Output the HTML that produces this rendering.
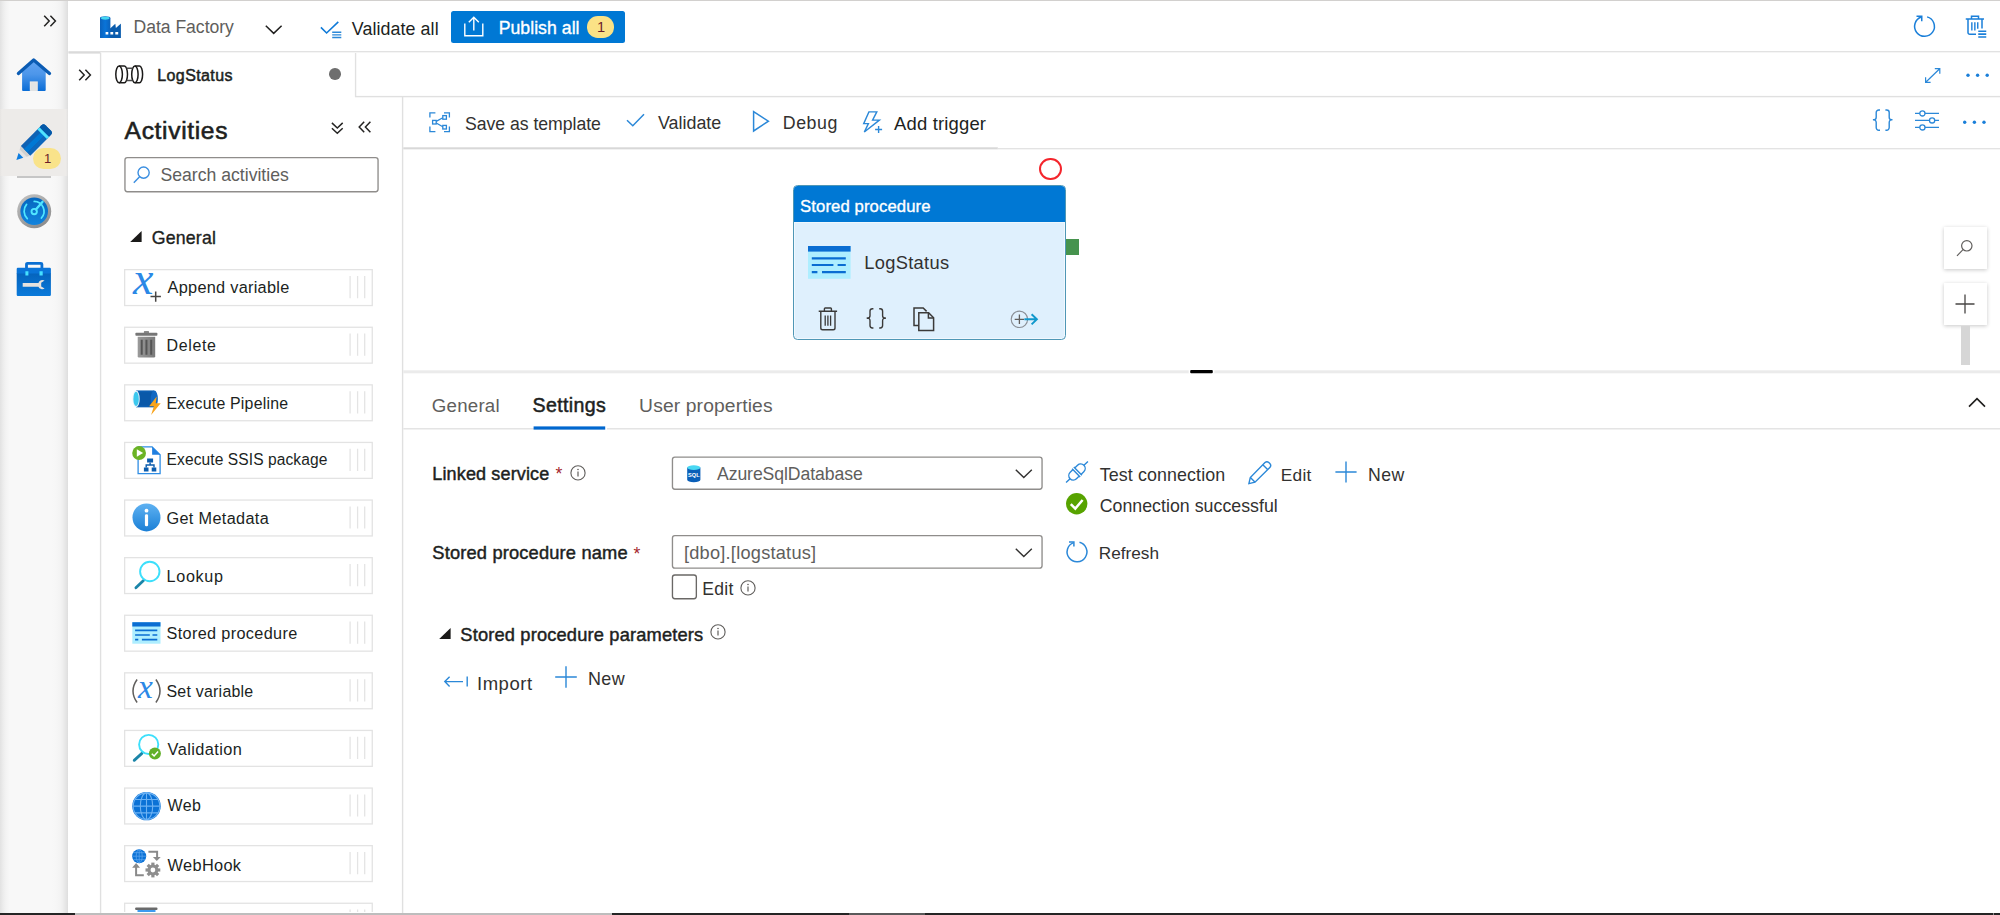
<!DOCTYPE html>
<html lang="en"><head><meta charset="utf-8"><title>LogStatus - Data Factory</title>
<style>
html,body{margin:0;padding:0;}
body{width:2000px;height:915px;overflow:hidden;background:#fff;position:relative;font-family:"Liberation Sans",sans-serif;}
.t{position:absolute;white-space:nowrap;display:block;}
.a{position:absolute;display:block;}
svg{position:absolute;display:block;overflow:visible;}

</style></head>
<body>
<!-- chrome -->
<div class="a" style="left:0;top:0;width:68.400px;height:915px;background:linear-gradient(90deg,#e2e2e2 0,#ececec 3px,#f3f3f3 6px,#f8f8f8 10px,#f8f8f8 52px,#f6f6f6 57px,#f3f3f3 60.500px,#efefef 62.500px,#e9e9e9 64.500px,#e3e3e3 66.500px,#dfdfdf 67.600px,#dfdfdf 68.400px)"></div>
<div class="a" style="left:0;top:109px;width:68.400px;height:66.500px;background:linear-gradient(90deg,#e6e4e2 0,#edebe9 2px,#edebe9 66px,#e4e3e2 67.400px,#e0dfde 68.400px)"></div>
<div class="a" style="left:16.6px;top:176.4px;width:34.4px;height:1.3px;background:#c6c6c6"></div>
<svg style="left:0;top:0" width="2000" height="915" viewBox="0 0 2000 915"><rect x="68.400" y="51" width="1931.600" height="1.350" fill="#e2e2e2"/><rect x="68.400" y="52" width="32.100" height="1.600" fill="#dadada"/><rect x="99.900" y="53" width="1.350" height="862" fill="#e0e0e0"/><rect x="354.900" y="53" width="1.350" height="44" fill="#e1e1e1"/><rect x="355" y="95.900" width="1645" height="1.400" fill="#e0e0e0"/><rect x="401.900" y="97" width="1.400" height="818" fill="#e0e0e0"/><rect x="403.300" y="147.200" width="594.500" height="0.800" fill="#dcdcdc"/><rect x="403.300" y="148" width="594.500" height="1.350" fill="#d8d8d8"/><rect x="997.800" y="148" width="1002.200" height="1.350" fill="#e3e3e3"/><rect x="403.300" y="370.300" width="1596.700" height="3" fill="#ebebeb"/><rect x="1188.700" y="369.800" width="25.600" height="3.800" fill="#fff"/><rect x="1190.200" y="370" width="22.600" height="3.200" rx="1" fill="#000"/><rect x="403.300" y="428" width="1596.700" height="1.500" fill="#e4e4e4"/><rect x="605.200" y="427.500" width="1.800" height="2.500" fill="#fff"/><rect x="533.600" y="426.400" width="71.600" height="3.200" fill="#0067cf"/></svg>
<div class="a" style="left:0;top:0;width:2000px;height:1.400px;background:#d2d0ce"></div>
<!-- bottom strip -->
<div class="a" style="left:0;top:912.700px;width:2000px;height:3px;background:#252525"></div>
<div class="a" style="left:75px;top:912.700px;width:537.400px;height:3px;background:#bdbdbd"></div>
<div class="a" style="left:849px;top:912.700px;width:76px;height:3px;background:#5a5a5a"></div><div class="a" style="left:1992.500px;top:912.700px;width:1.200px;height:3px;background:#8a8a8a"></div>
<!-- publish button -->
<div class="a" style="left:451.2px;top:10.8px;width:173.7px;height:32px;background:#0078d4;border-radius:2.5px"></div>
<div class="a" style="left:586.500px;top:16.200px;width:27.300px;height:21.600px;background:#fbe286;border-radius:10.800px"></div>
<div class="a" style="left:33px;top:147.900px;width:27.500px;height:21.300px;background:#f9e38a;border-radius:10.650px"></div>
<!-- boxes -->
<svg style="left:0;top:0" width="2000" height="915" viewBox="0 0 2000 915"><g fill="#fff" stroke="#8f8d8b" stroke-width="1.350"><rect x="124.950" y="157.650" width="253.100" height="34.100" rx="2.400"/><rect x="672.450" y="457.150" width="369.600" height="32.100" rx="2.400"/><rect x="672.450" y="535.650" width="369.600" height="32.500" rx="2.400"/><rect x="672.450" y="574.950" width="23.900" height="23.800" rx="2.400" stroke="#6a6866"/></g></svg>
<!-- dropdowns -->
<!-- node -->
<div class="a" style="left:792.7px;top:184.9px;width:273.1px;height:155.5px;box-sizing:border-box;border:1.800px solid #4f97b6;border-radius:4.500px;background:#dff0fd;overflow:hidden;box-shadow:inset 0 0 0 1px rgba(255,255,255,0.55)"><div style="height:0.6px;background:#e8f4fb"></div><div style="height:35.600px;background:#0078d4"></div><div style="height:1px;background:#eef7fd"></div></div>
<div class="a" style="left:1065.6px;top:238.8px;width:13.1px;height:16.7px;background:#46934e"></div>
<div class="a" style="left:1038.7px;top:157.8px;width:23px;height:22.6px;box-sizing:border-box;border:2px solid #f4252c;border-radius:50%"></div>
<!-- zoom controls -->
<div class="a" style="left:1943.5px;top:227.4px;width:43px;height:41.6px;background:#fff;box-shadow:0 1px 4px rgba(0,0,0,.22)"></div>
<div class="a" style="left:1943.5px;top:283.3px;width:43px;height:41.6px;background:#fff;box-shadow:0 1px 4px rgba(0,0,0,.22)"></div>
<div class="a" style="left:1960.500px;top:326px;width:9.300px;height:38.700px;background:#d6d6d6"></div>
<!-- sidebar icons -->
<svg style="left:43px;top:15px" width="14" height="12" viewBox="0 0 14 12"><path d="M1.2 0.8L6.2 6L1.2 11.2M7.4 0.8L12.4 6L7.4 11.2" fill="none" stroke="#252423" stroke-width="1.5"/></svg>
<svg style="left:16px;top:58px" width="36" height="34" viewBox="0 0 36 34"><defs><linearGradient id="gh" x1="0" y1="0" x2="0" y2="1"><stop offset="0" stop-color="#62a4f2"/><stop offset="0.450" stop-color="#4d96ea"/><stop offset="1" stop-color="#0a6dd6"/></linearGradient></defs><path d="M6.100 13L17.700 2.600L29.700 13V32a.9.900 0 0 1-.9.900H7a.9.900 0 0 1-.9-.9Z" fill="url(#gh)"/><path d="M2.400 15.400L17.700 1.900L33.500 15.400" fill="none" stroke="#0b5cb4" stroke-width="3.300" stroke-linejoin="round" stroke-linecap="round"/><path d="M13.800 23.400H21.800V32.900H13.800Z" fill="#efe9e4"/><path d="M14.800 24.400H20.800V32.900H14.800Z" fill="#e4e4e4"/></svg>
<svg style="left:0px;top:100px" width="70" height="70" viewBox="0 0 70 70"><g transform="translate(16.4 59.9) rotate(-45)"><path d="M5.600 -2.900L13 -6.700V6.700L5.600 2.900Z" fill="#e4e4e4"/><path d="M9.600 -5L13 -6.700V6.700L9.600 5Z" fill="#d0d0d0"/><path d="M0 0L6.400 -3.300V3.300Z" fill="#0c7ce0"/><path d="M13 -6.700H42.200a2.800 2.800 0 0 1 2.800 2.800V3.900a2.800 2.800 0 0 1-2.800 2.800H13Z" fill="#0f62b4"/><path d="M13 -2.300H38V2.600H13Z" fill="#0078d4"/><path d="M13 2.600H38V6.700H13Z" fill="#0d68bd"/><path d="M36.400 -6.700H39.600V6.700H36.400Z" fill="#4fe3ff"/><path d="M39.600 -6.700H42.200a2.800 2.800 0 0 1 2.800 2.800V3.900a2.800 2.800 0 0 1-2.800 2.800H39.600Z" fill="#0358a8"/></g></svg>
<svg style="left:16.500px;top:193.800px" width="35" height="35" viewBox="0 0 35 35"><defs><linearGradient id="gm" x1="0" y1="0" x2="0" y2="1"><stop offset="0" stop-color="#0566be"/><stop offset="1" stop-color="#1384de"/></linearGradient><linearGradient id="gr" x1="0" y1="0" x2="0.600" y2="1"><stop offset="0" stop-color="#c4c4c4"/><stop offset="1" stop-color="#8e8e8e"/></linearGradient></defs><circle cx="17.200" cy="17.200" r="17" fill="url(#gr)"/><circle cx="17.200" cy="17.200" r="13.800" fill="url(#gm)"/><path d="M9.600 10.400A10.300 10.300 0 0 0 10.300 24.600M17.200 7.400A9.900 9.900 0 0 1 24.400 24" fill="none" stroke="#50e6ff" stroke-width="1.700" stroke-linecap="round"/><path d="M18.900 15.500L25.600 7.800" stroke="#50e6ff" stroke-width="2.300" stroke-linecap="round"/><circle cx="17.200" cy="17.600" r="2.700" fill="none" stroke="#50e6ff" stroke-width="1.900"/></svg>
<svg style="left:16px;top:261px" width="36" height="36" viewBox="0 0 36 36"><defs><linearGradient id="gt" x1="0" y1="0" x2="0" y2="1"><stop offset="0" stop-color="#0564bd"/><stop offset="1" stop-color="#0b7ada"/></linearGradient></defs><path d="M10.500 7.500V3.300a1 1 0 0 1 1-1H24.900a1 1 0 0 1 1 1V7.500" fill="none" stroke="#0a6fd2" stroke-width="2.800"/><path d="M0.700 8a1.200 1.200 0 0 1 1.200-1.200H33.700a1.200 1.200 0 0 1 1.200 1.200V13H0.700Z" fill="#0a74d8"/><path d="M0.700 12.600H34.900V33.800a1.200 1.200 0 0 1-1.200 1.200H1.900a1.200 1.200 0 0 1-1.200-1.200Z" fill="url(#gt)"/><path d="M9.400 10.200H12.400V14.500H9.400ZM23.500 10.200H26.700V14.500H23.500Z" fill="#45e0ff"/><path d="M6.700 21.900H22.400A4.400 4.400 0 0 1 28.600 19.600L25.200 21.700V25.400L28.600 27.500A4.400 4.400 0 0 1 22.400 25.700H6.700Z" fill="#e6e2de"/></svg>
<!-- header icons -->
<svg style="left:99.600px;top:15.500px" width="21" height="22" viewBox="0 0 21 22"><defs><linearGradient id="gdf" x1="0" y1="0" x2="1" y2="0"><stop offset="0" stop-color="#0b62bd"/><stop offset="0.5" stop-color="#0a74d8"/><stop offset="1" stop-color="#0b62bd"/></linearGradient></defs><path d="M10.400 12.300L15.300 7.700L15.900 12L20.700 7.700H20.900V22H5V12.300Z" fill="#0a5cad"/><path d="M0 2.100H10.400V22H0Z" fill="url(#gdf)"/><ellipse cx="5.200" cy="2.100" rx="5.200" ry="1.900" fill="#0b62bd"/><ellipse cx="5.200" cy="2.050" rx="4.300" ry="1.650" fill="#45d6f2"/><path d="M5.600 15.900H8.300V18.600H5.600ZM10.400 15.900H13.200V18.600H10.400ZM15.300 15.900H18.200V18.600H15.300Z" fill="#fff"/></svg>
<svg style="left:264.5px;top:24.5px" width="18" height="10" viewBox="0 0 18 10"><path d="M0.8 0.8L8.7 8.4L16.6 0.8" fill="none" stroke="#201f1e" stroke-width="1.5"/></svg>
<svg style="left:319.5px;top:20.5px" width="22" height="18" viewBox="0 0 22 18"><path d="M0.9 6.4L6.6 12L18.3 0.8" fill="none" stroke="#0f7ad8" stroke-width="1.6"/><path d="M12.2 11.3H21.3M12.2 13.9H21.3M12.2 16.5H21.3" stroke="#2b88d8" stroke-width="1.4"/></svg>
<svg style="left:463.500px;top:16px" width="20" height="21" viewBox="0 0 20 21"><path d="M0.8 7.5V19.8H18.8V7.5M9.8 14.6V1.6M4.8 6.2L9.8 1.3L14.8 6.2" fill="none" stroke="#fff" stroke-width="1.4"/></svg>
<svg style="left:1913px;top:15px" width="24" height="24" viewBox="0 0 24 24"><path d="M14.100 1.850A9.900 9.900 0 1 1 8.300 2.050" fill="none" stroke="#1a7fd9" stroke-width="1.500"/><path d="M3.500 1.300H8.750V6.200" fill="none" stroke="#1a7fd9" stroke-width="1.500"/></svg>
<svg style="left:1965px;top:15px" width="23" height="24" viewBox="0 0 23 24"><g fill="none" stroke="#1a7fd9" stroke-width="1.500"><path d="M0.750 4H19M6.500 4V1.300H13.500V4M3 4V17.400A1.800 1.800 0 0 0 4.800 19.200H11M17 4V13.500"/><path d="M6.850 7.250V15.500M9.850 7.250V15.500M12.750 7.250V13.800" stroke-width="1.400"/><path d="M13.250 16.250H21.250M13.250 19.100H21.250M13.250 22H21.250" stroke-width="1.600"/></g></svg>
<!-- tab row icons -->
<svg style="left:77.500px;top:68.800px" width="14" height="12" viewBox="0 0 14 12"><path d="M1.2 0.8L6.2 6L1.2 11.2M7.4 0.8L12.4 6L7.4 11.2" fill="none" stroke="#252423" stroke-width="1.5"/></svg>
<svg style="left:115px;top:65px" width="29" height="19" viewBox="0 0 29 19"><g fill="none" stroke="#1b1a19" stroke-width="1.500"><ellipse cx="4.100" cy="9.350" rx="3.300" ry="8.300"/><path d="M4.100 1.050H9.400A3.100 8.300 0 0 1 9.400 17.650H4.100"/><ellipse cx="19.900" cy="9.350" rx="3.200" ry="8.300"/><path d="M19.900 1.050H24.500A3.100 8.300 0 0 1 24.500 17.650H19.900"/><path d="M11.600 3.200H17.600M11.600 15.500H17.600" stroke="#4a4a4a" stroke-width="1.400"/></g></svg>
<div class="a" style="left:329px;top:68.2px;width:11.6px;height:11.6px;border-radius:50%;background:#6e6e6e"></div>
<svg style="left:1925px;top:67.500px" width="16" height="15" viewBox="0 0 16 15"><path d="M0.700 14.200L14.700 0.800M9.800 0.700H14.800V5.700M0.600 9.300V14.300H5.600" fill="none" stroke="#2b88d8" stroke-width="1.200"/></svg>
<svg style="left:1965px;top:72px" width="26" height="7" viewBox="0 0 26 7"><g fill="#1a7fd9"><circle cx="3" cy="3.200" r="1.700"/><circle cx="12.600" cy="3.200" r="1.700"/><circle cx="22.200" cy="3.200" r="1.700"/></g></svg>
<svg style="left:1962px;top:118.800px" width="26" height="7" viewBox="0 0 26 7"><g fill="#1a7fd9"><circle cx="2.700" cy="3.200" r="1.700"/><circle cx="12.400" cy="3.200" r="1.700"/><circle cx="22" cy="3.200" r="1.700"/></g></svg>
<!-- activities header icons -->
<svg style="left:330.5px;top:121.5px" width="13" height="13" viewBox="0 0 13 13"><path d="M0.9 0.9L6.3 6L11.7 0.9M0.9 6.2L6.3 11.3L11.7 6.2" fill="none" stroke="#252423" stroke-width="1.5"/></svg>
<svg style="left:358px;top:120.700px" width="14" height="12" viewBox="0 0 14 12"><path d="M6.2 0.8L1.2 6L6.2 11.2M12.4 0.8L7.4 6L12.4 11.2" fill="none" stroke="#252423" stroke-width="1.5"/></svg>
<svg style="left:132.5px;top:166px" width="18" height="18" viewBox="0 0 18 18"><circle cx="10.6" cy="6.6" r="5.6" fill="none" stroke="#3a8ee0" stroke-width="1.4"/><path d="M6.6 10.8L0.8 16.8" stroke="#3a8ee0" stroke-width="1.4"/></svg>
<svg style="left:130px;top:231px" width="12" height="11" viewBox="0 0 12 11"><path d="M11.6 0V11H0.2Z" fill="#1b1a19"/></svg>
<svg style="left:101px;top:260px;overflow:hidden" width="301" height="652.3" viewBox="101 260 301 652.3">
<g transform="translate(124 269.00)"><rect x="0.65" y="0.65" width="247.6" height="35.9" fill="#fff" stroke="#e3e3e3" stroke-width="1.3"/><g transform="translate(0.5 0.40)"><text x="8.400" y="24.600" font-family="Liberation Serif, serif" font-style="italic" font-size="46" fill="#2b88e6">x</text><path d="M31.200 22V32.400M26 27.200H36.400" stroke="#484644" stroke-width="1.5"/></g><path d="M226.1 7V29.2M233.6 7V29.2M240.7 7V29.2" stroke="#e4e4e4" stroke-width="1.3"/></g>
<g transform="translate(124 326.60)"><rect x="0.65" y="0.65" width="247.6" height="35.9" fill="#fff" stroke="#e3e3e3" stroke-width="1.3"/><g transform="translate(0.5 0.47)"><defs><linearGradient id="gd" x1="0" y1="0" x2="1" y2="0"><stop offset="0" stop-color="#9a9a9a"/><stop offset="1" stop-color="#7a7a7a"/></linearGradient></defs><path d="M19.4 5.9V4.6a.6.6 0 0 1 .6-.6h3.9a.6.6 0 0 1 .6.6V5.9Z" fill="#8a8a8a"/><rect x="10.9" y="5.7" width="22" height="3" rx="0.8" fill="#767676"/><path d="M13.2 9.6H30.7V29.2a1.2 1.2 0 0 1-1.2 1.2H14.4a1.2 1.2 0 0 1-1.2-1.2Z" fill="url(#gd)"/><path d="M17.2 12.6V27.6M21.95 12.6V27.6M26.7 12.6V27.6" stroke="#555" stroke-width="2"/></g><path d="M226.1 7V29.2M233.6 7V29.2M240.7 7V29.2" stroke="#e4e4e4" stroke-width="1.3"/></g>
<g transform="translate(124 384.20)"><rect x="0.65" y="0.65" width="247.6" height="35.9" fill="#fff" stroke="#e3e3e3" stroke-width="1.3"/><g transform="translate(0.5 0.54)"><path d="M11.5 5.7H29.5V22.6H11.5Z" fill="#0d5fb3"/><path d="M13.5 7.6H28.5V20.8H13.5Z" fill="#0a58a8"/><ellipse cx="29.8" cy="14.15" rx="3.6" ry="8.45" fill="#1168c2"/><ellipse cx="11.6" cy="14.15" rx="3.6" ry="8.45" fill="#e8f4fb"/><ellipse cx="11.6" cy="14.15" rx="2.7" ry="7.2" fill="#3cc8ee"/><path d="M32.2 11.7L24.6 21.6H29.4L26.6 30.3L36.2 18.6H31.2Z" fill="#f9a41c"/></g><path d="M226.1 7V29.2M233.6 7V29.2M240.7 7V29.2" stroke="#e4e4e4" stroke-width="1.3"/></g>
<g transform="translate(124 441.80)"><rect x="0.65" y="0.65" width="247.6" height="35.9" fill="#fff" stroke="#e3e3e3" stroke-width="1.3"/><g transform="translate(0.5 0.61)"><path d="M13.6 4.4H27.6L35.6 12.4V31.2H13.6Z" fill="#fff" stroke="#2f8de4" stroke-width="1.3"/><path d="M27.6 4.4L35.6 12.4H27.6Z" fill="#1f7fe0"/><path d="M22.6 16H28.6V20H22.6ZM19.4 25H24V29H19.4ZM27.2 25H31.8V29H27.2Z" fill="#0b5cad"/><path d="M25.6 20V22.6M21.7 25V22.6H29.5V25" fill="none" stroke="#0b5cad" stroke-width="1.4"/><circle cx="14.6" cy="10.6" r="6.9" fill="#6bb324"/><path d="M12.3 6.8L18.6 10.6L12.3 14.4Z" fill="#fff"/></g><path d="M226.1 7V29.2M233.6 7V29.2M240.7 7V29.2" stroke="#e4e4e4" stroke-width="1.3"/></g>
<g transform="translate(124 499.40)"><rect x="0.65" y="0.65" width="247.6" height="35.9" fill="#fff" stroke="#e3e3e3" stroke-width="1.3"/><g transform="translate(0.5 0.68)"><defs><linearGradient id="gi" x1="0" y1="0" x2="0" y2="1"><stop offset="0" stop-color="#5fb2f2"/><stop offset="1" stop-color="#1a7fd6"/></linearGradient></defs><circle cx="22" cy="17.3" r="14" fill="url(#gi)"/><circle cx="22" cy="10.6" r="1.9" fill="#fff"/><rect x="20.4" y="14.2" width="3.2" height="12" rx="1.4" fill="#fff"/></g><path d="M226.1 7V29.2M233.6 7V29.2M240.7 7V29.2" stroke="#e4e4e4" stroke-width="1.3"/></g>
<g transform="translate(124 557.00)"><rect x="0.65" y="0.65" width="247.6" height="35.9" fill="#fff" stroke="#e3e3e3" stroke-width="1.3"/><g transform="translate(0.5 0.75)"><path d="M19 22.8L11.4 30" stroke="#1b85a8" stroke-width="2.8" stroke-linecap="round"/><circle cx="25.3" cy="13.75" r="9.7" fill="#fff" stroke="#3ddffb" stroke-width="1.9"/></g><path d="M226.1 7V29.2M233.6 7V29.2M240.7 7V29.2" stroke="#e4e4e4" stroke-width="1.3"/></g>
<g transform="translate(124 614.60)"><rect x="0.65" y="0.65" width="247.6" height="35.9" fill="#fff" stroke="#e3e3e3" stroke-width="1.3"/><g transform="translate(0.5 0.82)"><rect x="7.8" y="6.8" width="28.2" height="21.5" fill="#aeeeff"/><rect x="7.8" y="6.8" width="28.2" height="4.3" fill="#0a6dd2"/><path d="M10.6 15H32.8M10.6 19.6H25.3M28 19.6H32.8M10.6 24.3H13.8M17.4 24.3H32.8" stroke="#0a6dd2" stroke-width="1.7"/></g><path d="M226.1 7V29.2M233.6 7V29.2M240.7 7V29.2" stroke="#e4e4e4" stroke-width="1.3"/></g>
<g transform="translate(124 672.20)"><rect x="0.65" y="0.65" width="247.6" height="35.9" fill="#fff" stroke="#e3e3e3" stroke-width="1.3"/><g transform="translate(0.5 0.89)"><path d="M12.6 6.4Q4.4 18 12.6 29.4M31.4 6.4Q39.6 18 31.4 29.4" fill="none" stroke="#605e5c" stroke-width="1.5"/><text x="13.6" y="25.2" font-family="Liberation Serif, serif" font-style="italic" font-size="33.5" fill="#2b88e6">x</text></g><path d="M226.1 7V29.2M233.6 7V29.2M240.7 7V29.2" stroke="#e4e4e4" stroke-width="1.3"/></g>
<g transform="translate(124 729.80)"><rect x="0.65" y="0.65" width="247.6" height="35.9" fill="#fff" stroke="#e3e3e3" stroke-width="1.3"/><g transform="translate(0.5 0.96)"><path d="M17.4 22.6L9.7 29.6" stroke="#1b85a8" stroke-width="2.8" stroke-linecap="round"/><circle cx="24.2" cy="13.7" r="9.6" fill="#fff" stroke="#3ddffb" stroke-width="1.9"/><circle cx="30.4" cy="22.8" r="6" fill="#62b02a"/><path d="M27.3 23L29.6 25.2L33.6 20.8" fill="none" stroke="#fff" stroke-width="1.5"/></g><path d="M226.1 7V29.2M233.6 7V29.2M240.7 7V29.2" stroke="#e4e4e4" stroke-width="1.3"/></g>
<g transform="translate(124 787.40)"><rect x="0.65" y="0.65" width="247.6" height="35.9" fill="#fff" stroke="#e3e3e3" stroke-width="1.3"/><g transform="translate(0.5 1.03)"><circle cx="22" cy="17.7" r="14.2" fill="#0b72d6"/><g fill="none" stroke="#6db2f3" stroke-width="1.1"><circle cx="22" cy="17.7" r="13.3"/><ellipse cx="22" cy="17.7" rx="6.2" ry="13.3"/><path d="M22 4.4V31M8.7 17.7H35.3M10.6 11H33.4M10.6 24.4H33.4"/></g></g><path d="M226.1 7V29.2M233.6 7V29.2M240.7 7V29.2" stroke="#e4e4e4" stroke-width="1.3"/></g>
<g transform="translate(124 845.00)"><rect x="0.65" y="0.65" width="247.6" height="35.9" fill="#fff" stroke="#e3e3e3" stroke-width="1.3"/><g transform="translate(0.5 1.10)"><circle cx="14.7" cy="10.1" r="7" fill="#0b72d6"/><g fill="none" stroke="#5aa5ef" stroke-width="0.8"><ellipse cx="14.7" cy="10.1" rx="3" ry="6.6"/><path d="M14.7 3.4V16.8M8 10.1H21.4M9 6.6H20.4M9 13.6H20.4"/></g><path d="M23.9 5.7H32.6V11.4" fill="none" stroke="#8a8a8a" stroke-width="2"/><path d="M28.4 10.8H36.2L32.3 14.8Z" fill="#8a8a8a"/><path d="M19.3 29.2H11.6V21" fill="none" stroke="#8a8a8a" stroke-width="2"/><path d="M7.6 21.6H15.6L11.6 17Z" fill="#8a8a8a"/><g transform="translate(28.4 23.9)"><g fill="#8e8e8e"><rect x="-1.6" y="-7.4" width="3.2" height="14.8"/><rect x="-1.6" y="-7.4" width="3.2" height="14.8" transform="rotate(45)"/><rect x="-1.6" y="-7.4" width="3.2" height="14.8" transform="rotate(90)"/><rect x="-1.6" y="-7.4" width="3.2" height="14.8" transform="rotate(135)"/></g><circle r="5.4" fill="#8e8e8e"/><circle r="2.4" fill="#fff"/></g></g><path d="M226.1 7V29.2M233.6 7V29.2M240.7 7V29.2" stroke="#e4e4e4" stroke-width="1.3"/></g>
<g transform="translate(124 902.60)"><rect x="0.65" y="0.65" width="247.6" height="35.9" fill="#fff" stroke="#e3e3e3" stroke-width="1.3"/><g transform="translate(0.5 1.17)"><rect x="10.6" y="3.8" width="22.4" height="2.4" rx="1" fill="#6a6a6a"/><rect x="13" y="6.2" width="18" height="4" fill="#3c9bf0"/></g><path d="M226.1 7V29.2M233.6 7V29.2M240.7 7V29.2" stroke="#e4e4e4" stroke-width="1.3"/></g>
</svg>
<!-- toolbar icons -->
<svg style="left:429px;top:111.5px" width="22" height="21" viewBox="0 0 22 21"><g fill="none" stroke="#2b88d8" stroke-width="1.3"><path d="M0.9 5.6V0.9H6.4M15 0.9H20.4V5.6M20.4 14.6V19.6H15M6.4 19.6H0.9V14.6"/><rect x="3.6" y="8.4" width="3.6" height="3.6"/><rect x="13.8" y="3.6" width="3.6" height="3.6"/><rect x="13.8" y="13.4" width="3.6" height="3.6"/><path d="M7.2 9.4L13.8 5.8M7.2 11L13.8 14.8"/></g></svg>
<svg style="left:626px;top:112.700px" width="19" height="14" viewBox="0 0 19 14"><path d="M1 7.2L6.8 12.8L18 1.2" fill="none" stroke="#2b88d8" stroke-width="1.5"/></svg>
<svg style="left:751.5px;top:110px" width="18" height="23" viewBox="0 0 18 23"><path d="M1.6 1.6L16.4 11.2L1.6 21Z" fill="none" stroke="#2b88d8" stroke-width="1.5" stroke-linejoin="miter"/></svg>
<svg style="left:863px;top:110.5px" width="20" height="23" viewBox="0 0 20 23"><path d="M5.9 0.9H13.8L9.6 9.1H16.4L1.3 21L5.4 12.6H0.7Z" fill="none" stroke="#2b88d8" stroke-width="1.4" stroke-linejoin="miter"/><path d="M15.6 15V22M12.1 18.5H19.1" stroke="#2b88d8" stroke-width="1.4"/></svg>
<svg style="left:1871.5px;top:109px" width="22" height="23" viewBox="0 0 22 23"><path d="M8 1H6.8a2.6 2.6 0 0 0-2.6 2.6V8.2a2.6 2.6 0 0 1-2.6 2.6H1A2.6 2.6 0 0 1 4.200 13.400V18.600a2.600 2.600 0 0 0 2.600 2.600H8M13.4 1H14.600a2.600 2.600 0 0 1 2.600 2.600V8.200a2.600 2.600 0 0 0 2.600 2.600H20.400A2.600 2.600 0 0 0 17.200 13.400V18.600a2.600 2.600 0 0 1-2.600 2.600H13.400" fill="none" stroke="#2b88d8" stroke-width="1.4"/></svg>
<svg style="left:1915px;top:110px" width="24" height="21" viewBox="0 0 24 21"><g fill="#fff" stroke="#2b88d8" stroke-width="1.3"><path d="M0 3.400H24M0 10.4H24M0 17.4H24" fill="none"/><circle cx="7.400" cy="3.400" r="2.600"/><circle cx="17.100" cy="10.400" r="2.600"/><circle cx="7.400" cy="17.400" r="2.600"/></g></svg>
<!-- node icons -->
<svg style="left:808px;top:245.8px" width="43" height="33" viewBox="0 0 43 33"><rect width="42.6" height="32.8" fill="#aeeeff"/><rect width="42.6" height="5.6" fill="#0a6dd2"/><path d="M3.800 12.4H37.8M3.800 19H25.400M29.600 19H37.8M3.800 26.2H9.400M14 26.2H37.8" stroke="#0a6dd2" stroke-width="2.200"/></svg>
<svg style="left:818px;top:306.5px" width="20" height="24" viewBox="0 0 20 24"><g fill="none" stroke="#3b3a39" stroke-width="1.4"><path d="M0.7 4.200H19.100M6.400 4V1.800a.8.8 0 0 1 .8-.8H12.600a.8.8 0 0 1 .8.8V4M2.800 4.400V21a1.800 1.800 0 0 0 1.800 1.800H15.200a1.800 1.800 0 0 0 1.800-1.800V4.400"/><path d="M7.200 8.400V18.800M9.900 8.400V18.800M12.600 8.400V18.800" stroke-width="1.300"/></g></svg>
<svg style="left:865.5px;top:307.5px" width="21" height="21" viewBox="0 0 21 21"><path d="M7.400 0.800H6.400a2.400 2.400 0 0 0-2.400 2.400V7.800a2.400 2.400 0 0 1-2.400 2.400H0.800A2.400 2.400 0 0 1 4 12.600V17.600a2.400 2.400 0 0 0 2.400 2.400H7.400M13.200 0.800H14.200a2.400 2.400 0 0 1 2.400 2.400V7.800a2.400 2.400 0 0 0 2.400 2.400H19.800A2.400 2.400 0 0 0 16.600 12.600V17.600a2.400 2.400 0 0 1-2.400 2.400H13.200" fill="none" stroke="#3b3a39" stroke-width="1.400"/></svg>
<svg style="left:912.5px;top:306.500px" width="22" height="25" viewBox="0 0 22 25"><g fill="none" stroke="#3b3a39" stroke-width="1.500"><path d="M5.800 18.600H1V1H10.200L13.600 4.400"/><path d="M5.800 5.800H15.600L20.600 10.800V23.600H5.800Z"/><path d="M15.400 5.800V11H20.600"/></g></svg>
<svg style="left:1009.500px;top:309.500px" width="30" height="19" viewBox="0 0 30 19"><circle cx="9.400" cy="9.300" r="8.200" fill="none" stroke="#8a8f96" stroke-width="1.100"/><path d="M9.400 4.600V14M4.700 9.300H14.100" stroke="#605e5c" stroke-width="1.300"/><path d="M14.400 9.300H26.600M21.600 4.200L26.900 9.300L21.600 14.400" fill="none" stroke="#1098cc" stroke-width="1.900"/></svg>
<!-- zoom control icons -->
<svg style="left:1955.500px;top:238.500px" width="18" height="18" viewBox="0 0 18 18"><circle cx="10.800" cy="6.800" r="5.200" fill="none" stroke="#605e5c" stroke-width="1.200"/><path d="M7 10.600L1 16.800" stroke="#605e5c" stroke-width="1.200"/></svg>
<svg style="left:1954.500px;top:293.500px" width="20" height="20" viewBox="0 0 20 20"><path d="M10 0.500V19.500M0.500 10H19.500" stroke="#484644" stroke-width="1.300"/></svg>
<svg style="left:1968px;top:397px" width="18" height="11" viewBox="0 0 18 11"><path d="M1 9.600L9 1.600L17 9.600" fill="none" stroke="#201f1e" stroke-width="1.600"/></svg>
<!-- form icons -->
<svg style="left:570px;top:465.400px" width="16" height="16" viewBox="0 0 16 16"><circle cx="8" cy="7.900" r="7.100" fill="none" stroke="#605e5c" stroke-width="1.100"/><path d="M8 6.600V11.600" stroke="#605e5c" stroke-width="1.200"/><circle cx="8" cy="4.500" r="0.800" fill="#605e5c"/></svg>
<svg style="left:740px;top:579.600px" width="16" height="16" viewBox="0 0 16 16"><circle cx="8" cy="7.900" r="7.100" fill="none" stroke="#605e5c" stroke-width="1.100"/><path d="M8 6.600V11.600" stroke="#605e5c" stroke-width="1.200"/><circle cx="8" cy="4.500" r="0.800" fill="#605e5c"/></svg>
<svg style="left:710.200px;top:624.400px" width="16" height="16" viewBox="0 0 16 16"><circle cx="8" cy="7.900" r="7.100" fill="none" stroke="#605e5c" stroke-width="1.100"/><path d="M8 6.600V11.600" stroke="#605e5c" stroke-width="1.200"/><circle cx="8" cy="4.500" r="0.800" fill="#605e5c"/></svg>
<svg style="left:686.500px;top:464.800px" width="14" height="18" viewBox="0 0 14 18"><path d="M0.200 2.600V14.800A6.600 2.400 0 0 0 13.400 14.800V2.600Z" fill="#0a5fb8"/><ellipse cx="6.800" cy="2.600" rx="6.600" ry="2.400" fill="#49d7f2"/><text x="6.800" y="11.600" font-family="Liberation Sans, sans-serif" font-weight="700" font-size="5.600" fill="#fff" text-anchor="middle">SQL</text></svg>
<svg style="left:1014.500px;top:468.800px" width="18" height="10" viewBox="0 0 18 10"><path d="M0.800 0.800L8.800 8.600L16.800 0.800" fill="none" stroke="#323130" stroke-width="1.400"/></svg>
<svg style="left:1014.500px;top:548.200px" width="18" height="10" viewBox="0 0 18 10"><path d="M0.800 0.800L8.800 8.600L16.800 0.800" fill="none" stroke="#323130" stroke-width="1.400"/></svg>
<svg style="left:1062px;top:457.400px" width="30" height="30" viewBox="0 0 30 30"><g transform="translate(15 15) rotate(-44)" fill="none" stroke="#2b88d8" stroke-width="1.400"><path d="M-15.200 0H-9.600M9.600 0H15.200"/><path d="M-1.200 -4.500H-5.100A4.500 4.500 0 0 0 -5.100 4.500H-1.200M-1.200 -5.800V5.800"/><path d="M1.200 -4.500H5.100A4.500 4.500 0 0 1 5.100 4.500H1.200M1.200 -5.800V5.800"/></g></svg>
<svg style="left:1247.500px;top:460.600px" width="24" height="24" viewBox="0 0 24 24"><g fill="none" stroke="#2b88d8" stroke-width="1.400"><path d="M17 1.600a2.700 2.700 0 0 1 3.800 0l1 1a2.700 2.700 0 0 1 0 3.800L7 21.200L0.900 22.600L2.300 16.500Z"/><path d="M14.800 3.800L19.600 8.600M2.400 16.600L6.900 21.100"/></g></svg>
<svg style="left:1334.500px;top:461px" width="22" height="22" viewBox="0 0 22 22"><path d="M11 0.400V21.600M0.400 11H21.600" stroke="#2b88d8" stroke-width="1.400"/></svg>
<svg style="left:1065.500px;top:492.900px" width="22" height="22" viewBox="0 0 22 22"><circle cx="10.700" cy="10.700" r="10.700" fill="#57a300"/><path d="M4.800 11.100L9.300 15.600L16.600 7" fill="none" stroke="#fff" stroke-width="2.500"/></svg>
<svg style="left:1066px;top:540.500px" width="23" height="23" viewBox="0 0 23 23"><path d="M13.500 1.320A9.900 9.900 0 1 1 7.600 1.600" fill="none" stroke="#2b88d8" stroke-width="1.500"/><path d="M3 0.900H7.900V5.500" fill="none" stroke="#2b88d8" stroke-width="1.500"/></svg>
<svg style="left:439px;top:627.900px" width="12" height="11" viewBox="0 0 12 11"><path d="M11.600 0V11H0.200Z" fill="#1b1a19"/></svg>
<svg style="left:443.500px;top:675.500px" width="25" height="12" viewBox="0 0 25 12"><path d="M0.800 5.600H19M5.600 0.800L0.800 5.600L5.600 10.400M23.200 0.600V10.600" fill="none" stroke="#2b88d8" stroke-width="1.400"/></svg>
<svg style="left:554.500px;top:666px" width="22" height="22" viewBox="0 0 22 22"><path d="M11 0.200V21.800M0.200 11H21.800" stroke="#2b88d8" stroke-width="1.400"/></svg>

<span class="t" style="left:133.52px;top:19.43px;font-size:17.60px;line-height:17.60px;color:#605e5c;letter-spacing:-0.033px;">Data Factory</span>
<span class="t" style="left:351.84px;top:20.55px;font-size:17.83px;line-height:17.83px;color:#201f1e;letter-spacing:0.082px;">Validate all</span>
<span class="t" style="left:498.68px;top:19.79px;font-size:17.66px;line-height:17.66px;color:#ffffff;letter-spacing:0.036px;-webkit-text-stroke:0.35px #ffffff;">Publish all</span>
<span class="t" style="left:597.08px;top:19.57px;font-size:14.69px;line-height:14.69px;color:#6b1d2a;letter-spacing:0.000px;">1</span>
<span class="t" style="left:157.31px;top:68.35px;font-size:16.01px;line-height:16.01px;color:#201f1e;letter-spacing:0.382px;-webkit-text-stroke:0.5px #201f1e;">LogStatus</span>
<span class="t" style="left:44.06px;top:152.29px;font-size:13.15px;line-height:13.15px;color:#6b1d2a;letter-spacing:0.000px;">1</span>
<span class="t" style="left:124.58px;top:118.51px;font-size:24.58px;line-height:24.58px;color:#201f1e;letter-spacing:0.660px;-webkit-text-stroke:0.6px #201f1e;">Activities</span>
<span class="t" style="left:160.47px;top:167.17px;font-size:17.64px;line-height:17.64px;color:#605e5c;letter-spacing:0.000px;">Search activities</span>
<span class="t" style="left:151.68px;top:229.89px;font-size:17.73px;line-height:17.73px;color:#201f1e;letter-spacing:0.210px;-webkit-text-stroke:0.35px #201f1e;">General</span>
<span class="t" style="left:167.58px;top:279.18px;font-size:16.32px;line-height:16.32px;color:#201f1e;letter-spacing:0.270px;">Append variable</span>
<span class="t" style="left:166.57px;top:338.20px;font-size:15.99px;line-height:15.99px;color:#201f1e;letter-spacing:0.648px;">Delete</span>
<span class="t" style="left:166.57px;top:395.67px;font-size:15.88px;line-height:15.88px;color:#201f1e;letter-spacing:0.216px;">Execute Pipeline</span>
<span class="t" style="left:166.57px;top:452.24px;font-size:15.57px;line-height:15.57px;color:#201f1e;letter-spacing:0.085px;">Execute SSIS package</span>
<span class="t" style="left:166.52px;top:509.73px;font-size:16.24px;line-height:16.24px;color:#201f1e;letter-spacing:0.344px;">Get Metadata</span>
<span class="t" style="left:166.57px;top:567.52px;font-size:16.17px;line-height:16.17px;color:#201f1e;letter-spacing:0.684px;">Lookup</span>
<span class="t" style="left:166.52px;top:624.66px;font-size:16.25px;line-height:16.25px;color:#201f1e;letter-spacing:0.348px;">Stored procedure</span>
<span class="t" style="left:166.52px;top:683.88px;font-size:15.94px;line-height:15.94px;color:#201f1e;letter-spacing:0.229px;">Set variable</span>
<span class="t" style="left:167.58px;top:740.74px;font-size:16.35px;line-height:16.35px;color:#201f1e;letter-spacing:0.400px;">Validation</span>
<span class="t" style="left:167.42px;top:798.27px;font-size:15.97px;line-height:15.97px;color:#201f1e;letter-spacing:0.450px;">Web</span>
<span class="t" style="left:167.58px;top:856.74px;font-size:16.35px;line-height:16.35px;color:#201f1e;letter-spacing:0.330px;">WebHook</span>
<span class="t" style="left:465.05px;top:115.52px;font-size:17.67px;line-height:17.67px;color:#323130;letter-spacing:-0.036px;">Save as template</span>
<span class="t" style="left:658.00px;top:115.36px;font-size:17.86px;line-height:17.86px;color:#323130;letter-spacing:0.000px;">Validate</span>
<span class="t" style="left:782.78px;top:115.43px;font-size:17.78px;line-height:17.78px;color:#323130;letter-spacing:0.540px;">Debug</span>
<span class="t" style="left:894.00px;top:114.85px;font-size:18.46px;line-height:18.46px;color:#201f1e;letter-spacing:0.180px;">Add trigger</span>
<span class="t" style="left:800.10px;top:198.97px;font-size:16.71px;line-height:16.71px;color:#ffffff;letter-spacing:0.096px;-webkit-text-stroke:0.35px #ffffff;">Stored procedure</span>
<span class="t" style="left:864.15px;top:254.25px;font-size:18.30px;line-height:18.30px;color:#323130;letter-spacing:0.337px;">LogStatus</span>
<span class="t" style="left:431.73px;top:396.69px;font-size:18.71px;line-height:18.71px;color:#605e5c;letter-spacing:0.240px;">General</span>
<span class="t" style="left:532.52px;top:395.95px;font-size:19.59px;line-height:19.59px;color:#201f1e;letter-spacing:0.360px;-webkit-text-stroke:0.5px #201f1e;">Settings</span>
<span class="t" style="left:639.10px;top:396.22px;font-size:19.27px;line-height:19.27px;color:#605e5c;letter-spacing:0.129px;">User properties</span>
<span class="t" style="left:432.31px;top:465.12px;font-size:18.02px;line-height:18.02px;color:#201f1e;letter-spacing:0.138px;-webkit-text-stroke:0.45px #201f1e;">Linked service</span>
<span class="t" style="left:555.54px;top:466.24px;font-size:17.57px;line-height:17.57px;color:#a4262c;letter-spacing:0.000px;">*</span>
<span class="t" style="left:717.00px;top:466.39px;font-size:17.64px;line-height:17.64px;color:#605e5c;letter-spacing:-0.084px;">AzureSqlDatabase</span>
<span class="t" style="left:1099.68px;top:467.30px;font-size:17.88px;line-height:17.88px;color:#323130;letter-spacing:0.103px;">Test connection</span>
<span class="t" style="left:1280.78px;top:466.91px;font-size:17.27px;line-height:17.27px;color:#323130;letter-spacing:0.300px;">Edit</span>
<span class="t" style="left:1367.94px;top:466.57px;font-size:17.67px;line-height:17.67px;color:#323130;letter-spacing:0.450px;">New</span>
<span class="t" style="left:1099.68px;top:498.29px;font-size:17.76px;line-height:17.76px;color:#323130;letter-spacing:0.027px;">Connection successful</span>
<span class="t" style="left:432.31px;top:544.49px;font-size:18.27px;line-height:18.27px;color:#201f1e;letter-spacing:0.171px;-webkit-text-stroke:0.45px #201f1e;">Stored procedure name</span>
<span class="t" style="left:633.58px;top:545.61px;font-size:17.57px;line-height:17.57px;color:#a4262c;letter-spacing:0.000px;">*</span>
<span class="t" style="left:683.94px;top:544.33px;font-size:18.21px;line-height:18.21px;color:#605e5c;letter-spacing:0.236px;">[dbo].[logstatus]</span>
<span class="t" style="left:1098.78px;top:544.75px;font-size:17.21px;line-height:17.21px;color:#323130;letter-spacing:0.000px;">Refresh</span>
<span class="t" style="left:702.15px;top:581.20px;font-size:17.55px;line-height:17.55px;color:#323130;letter-spacing:0.360px;">Edit</span>
<span class="t" style="left:460.31px;top:626.06px;font-size:18.28px;line-height:18.28px;color:#201f1e;letter-spacing:0.166px;-webkit-text-stroke:0.45px #201f1e;">Stored procedure parameters</span>
<span class="t" style="left:476.99px;top:674.66px;font-size:18.50px;line-height:18.50px;color:#323130;letter-spacing:0.540px;">Import</span>
<span class="t" style="left:587.94px;top:671.47px;font-size:17.97px;line-height:17.97px;color:#323130;letter-spacing:0.450px;">New</span>
</body></html>
